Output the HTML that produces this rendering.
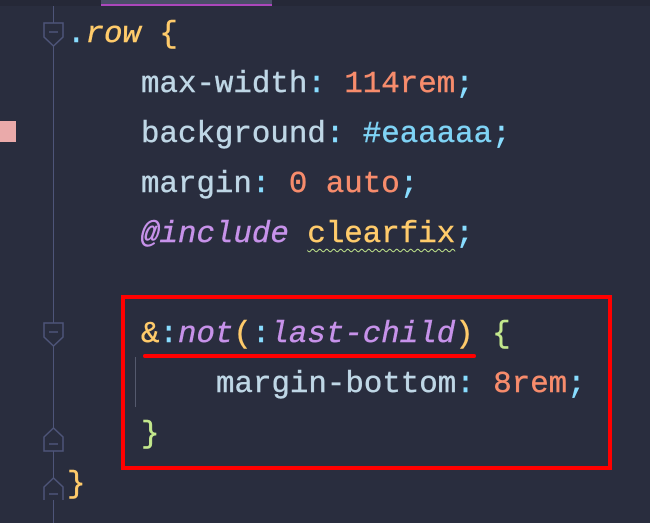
<!DOCTYPE html>
<html><head><meta charset="utf-8"><style>
html,body{margin:0;padding:0}
body{width:650px;height:523px;background:#292d3e;position:relative;overflow:hidden;font-family:"Liberation Mono","DejaVu Sans Mono",monospace;}
.top{position:absolute;left:0;top:0;width:650px;height:6px;background:#252837;}
.tab{position:absolute;left:101px;top:0;width:171px;height:6px;background:#4a4e68;border-bottom:2px solid #ab47bc;box-sizing:border-box;}
.l{position:absolute;left:0;height:50px;line-height:50px;font-size:30.8px;white-space:pre;color:#bfd7e6;-webkit-text-stroke:0.4px currentColor;}
.y{color:#ffcb6b}.o{color:#f78c6c}.b{color:#89ddff}.c{color:#7fd3f5}.p{color:#c792ea;font-style:italic}.g{color:#c3e88d}
.sq{text-decoration:underline wavy #c3e88d;text-underline-offset:6px;text-decoration-thickness:1px}
.gut{position:absolute;left:53px;top:6px;width:1px;height:517px;background:#4e5579;}
.mark{position:absolute;left:0;top:121px;width:16px;height:21px;background:#eaaaaa;}
.box{position:absolute;left:121px;top:295px;width:491px;height:175px;border:4px solid #ff0000;box-sizing:border-box;}
.ul{position:absolute;left:143px;top:354px;width:333px;height:4px;background:#ff0000;border-radius:2px;}
.ig{position:absolute;left:135px;top:357px;width:1px;height:50px;background:#555a6e;}
</style></head><body>
<div class="top"></div><div class="tab"></div>
<div class="gut"></div>
<svg style="position:absolute;left:42px;top:20px" width="24" height="480" viewBox="0 0 24 480">
<g fill="#292d3e" stroke="#4e5579" stroke-width="1.5">
<path d="M2,3 H21 V17 L11.5,26 L2,17 Z"/>
<path d="M2,303 H21 V317 L11.5,326 L2,317 Z"/>
<path d="M2,417 L11.5,408 L21,417 V431 H2 Z"/>
<path d="M2,467 L11.5,458 L21,467 V481 H2 Z"/>
</g>
<g stroke="#4e5579" stroke-width="1.5">
<path d="M7,12 H16"/><path d="M7,312 H16"/><path d="M7,424 H16"/><path d="M7,474 H16"/>
</g>
</svg>
<div class="mark"></div>
<div class="l" style="top:10px;left:67px"><span class="b">.</span><span class="y" style="font-style:italic">row</span> <span class="y">{</span></div>
<div class="l" style="top:60px;left:141px">max-width<span class="b">:</span> <span class="o">114rem</span><span class="b">;</span></div>
<div class="l" style="top:110px;left:141px">background<span class="b">:</span> <span class="c">#eaaaaa</span><span class="b">;</span></div>
<div class="l" style="top:160px;left:141px">margin<span class="b">:</span> <span class="o">0 auto</span><span class="b">;</span></div>
<div class="l" style="top:210px;left:141px"><span class="p">@include</span> <span class="y sq">clearfix</span><span class="b">;</span></div>
<div class="l" style="top:310px;left:141px"><span class="y">&amp;</span><span class="b">:</span><span class="p">not</span><span class="y">(</span><span class="b">:</span><span class="p">last-child</span><span class="y">)</span> <span class="g">{</span></div>
<div class="l" style="top:360px;left:216px">margin-bottom<span class="b">:</span> <span class="o">8rem</span><span class="b">;</span></div>
<div class="l" style="top:410px;left:141px"><span class="g">}</span></div>
<div class="l" style="top:460px;left:67px"><span class="y">}</span></div>
<div class="ig"></div>
<div class="box"></div>
<div class="ul"></div>
</body></html>
